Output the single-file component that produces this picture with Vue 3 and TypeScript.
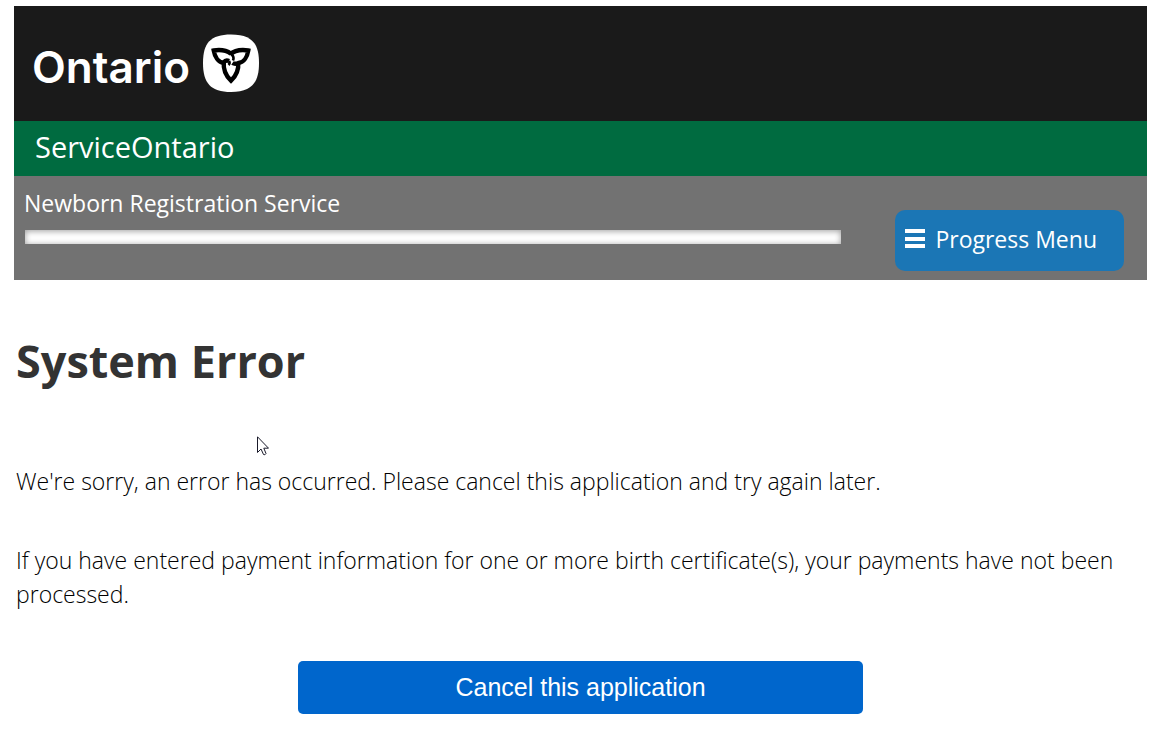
<script setup lang="ts">
import { ref } from 'vue'

const progress = ref<number>(0)
const paragraphs: string[] = [
  "We're sorry, an error has occurred. Please cancel this application and try again later.",
  'If you have entered payment information for one or more birth certificate(s), your payments have not been processed.',
]
</script>

<template>
  <div class="page">
    <header>
      <div class="brand">
        <a class="logo" href="#" aria-label="Ontario">
          <span class="wordmark">Ontario</span>
          <svg class="trillium" viewBox="0 0 57 58" aria-hidden="true">
            <path
              fill="#fff"
              d="M28 0.500C48.500 0.500 56 9 56 29S48.500 58 28 58 0 49 0 29 7.500 0.500 28 0.500Z"
            />
            <g fill="none" stroke="#000" stroke-width="4.400" stroke-linejoin="miter">
              <path d="M28 19.800C23 16 17 15.500 10.700 16.500C11.700 22.500 15.200 28 20.500 28.700C22 26.500 24 26 26 27" />
              <path d="M27 20.500C32 16 39 15.500 45.300 16.500C44.300 22.500 41 28.500 35.500 29C33 30 31 30 29.500 29" />
              <path d="M20.800 27.500C20 36.500 23.500 42.500 28 46.700C32.500 42.500 36 36.500 35.200 28" />
              <path d="M28 19.500C30.500 22 31.200 24 30 26.500M26 27C27 28.500 26.500 30 25.500 31" stroke-width="2.600" />
            </g>
          </svg>
        </a>
      </div>
      <div class="ministry">ServiceOntario</div>
      <div class="service">
        <div class="status">
          <div id="service-name" class="service-name">Newborn Registration Service</div>
          <div
            class="track"
            role="progressbar"
            aria-labelledby="service-name"
            :aria-valuenow="progress"
            aria-valuemin="0"
            aria-valuemax="100"
          >
            <div class="fill" :style="{ width: progress + '%' }"></div>
          </div>
        </div>
        <button type="button" class="menu">
          <svg class="bars" viewBox="0 0 20 20" aria-hidden="true">
            <path fill="#fff" d="M0 0h20v4H0zM0 8h20v4H0zM0 15h20v4H0z" />
          </svg>
          <span>Progress Menu</span>
        </button>
      </div>
    </header>
    <main>
      <h1>System Error</h1>
      <p v-for="text in paragraphs" :key="text">{{ text }}</p>
      <button type="button" class="cancel">Cancel this application</button>
    </main>
    <svg class="pointer" viewBox="0 0 12 20" aria-hidden="true">
      <path
        d="M.5 .8V16.500L4 13L6.500 18.500Q8 19.500 9 17.500L6.800 12.200H11.500Z"
        fill="#fff"
        stroke="#1a1a2a"
        stroke-width="1"
      />
    </svg>
  </div>
</template>

<style>
body {
  background: #fff;
}
</style>

<style scoped>
.page {
  position: relative;
  padding: 6px 12px 28px 14px;
  font-family: 'Open Sans', 'Noto Sans', sans-serif;
  font-size: 23px;
  line-height: 34px;
  color: #000;
}
.brand {
  display: flex;
  align-items: center;
  padding: 28px 20px 29px 18px;
  background: #1a1a1a;
}
.logo {
  display: flex;
  align-items: center;
  gap: 13px;
  color: #fff;
  text-decoration: none;
}
.wordmark {
  font-family: Inter, sans-serif;
  font-size: 44px;
  font-weight: 600;
  line-height: 58px;
  padding-top: 4px;
  margin-bottom: -4px;
}
.trillium {
  width: 57px;
  height: 58px;
}
.ministry {
  padding: 7px 21px 10px;
  background: #006b40;
  color: #fff;
  font-size: 29px;
  line-height: 38px;
}
.service {
  display: flex;
  justify-content: space-between;
  align-items: flex-start;
  padding: 10px 23px 9px 11px;
  background: #727272;
  color: #fff;
}
.status {
  width: 816px;
  flex: 0 1 auto;
}
.service-name {
  margin-left: -1px;
}
.track {
  height: 14px;
  margin-top: 10px;
  background: #fff;
  box-shadow: inset 0 1px 6px rgba(0, 0, 0, 0.4);
}
.fill {
  height: 100%;
  background: #1b76b5;
}
.menu {
  display: flex;
  align-items: center;
  gap: 10px;
  margin-top: 24px;
  padding: 12px 27px 15px 10px;
  border: 0;
  border-radius: 10px;
  background: #1b76b5;
  color: #fff;
  font: inherit;
}
.bars {
  width: 20px;
  height: 20px;
}
main {
  padding: 0 2px;
}
h1 {
  margin: 51px 0 73px;
  color: #333;
  font-size: 45px;
  font-weight: 700;
  line-height: 60px;
}
p {
  margin: 0 0 45px;
  font-weight: 300;
}
.cancel {
  display: block;
  width: 50%;
  margin: 50px auto 0;
  padding: 9px 20px 10px;
  border: 0;
  border-radius: 5px;
  background: #0066cc;
  color: #fff;
  font-family: 'Liberation Sans', Arial, sans-serif;
  font-size: 25px;
  line-height: 34px;
}
.pointer {
  position: absolute;
  left: 257px;
  top: 436px;
  width: 12px;
  height: 20px;
}
</style>
